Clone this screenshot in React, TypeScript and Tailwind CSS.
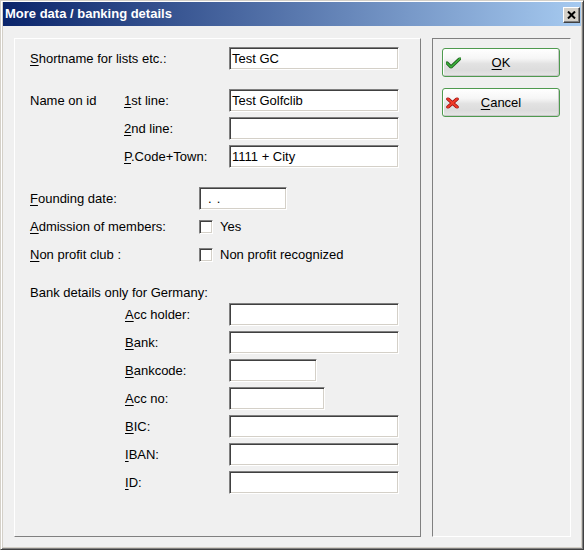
import React from "react";

const font = { fontFamily: '"Liberation Sans", Arial, sans-serif' };

function U({ children }: { children: React.ReactNode }) {
  return <span className="underline underline-offset-[2px]">{children}</span>;
}

function Field({ w, children }: { w: string; children?: React.ReactNode }) {
  return (
    <div
      className={`${w} h-[23px] bg-white border border-t-[#808080] border-l-[#808080] border-b-white border-r-white shadow-[inset_1px_1px_0_#404040,inset_-1px_-1px_0_#d4d0c8] pl-[2px] flex items-center text-[13px] text-black whitespace-nowrap overflow-hidden`}
    >
      {children}
    </div>
  );
}

function Check() {
  return (
    <div className="w-[14px] h-[14px] bg-white border border-t-[#808080] border-l-[#808080] border-b-white border-r-white shadow-[inset_1px_1px_0_#404040,inset_-1px_-1px_0_#d4d0c8]" />
  );
}

function CheckIcon() {
  return (
    <svg width="15" height="11" viewBox="0 0 15 11">
      <path d="M1 5.5 L5 9.5 L14 1" fill="none" stroke="#1f5f1f" strokeWidth="3.2" strokeLinejoin="round" strokeLinecap="round" />
      <path d="M1 5.5 L5 9.5 L14 1" fill="none" stroke="#3cb43c" strokeWidth="1.6" strokeLinejoin="round" strokeLinecap="round" />
    </svg>
  );
}

function CrossIcon() {
  return (
    <svg width="13" height="11" viewBox="0 0 13 11">
      <path d="M2 1.5 L11 9.5 M11 1.5 L2 9.5" fill="none" stroke="#9a1010" strokeWidth="3.6" strokeLinecap="round" />
      <path d="M2 1.5 L11 9.5 M11 1.5 L2 9.5" fill="none" stroke="#f03a28" strokeWidth="2" strokeLinecap="round" />
    </svg>
  );
}

function DlgButton({ icon, children }: { icon: React.ReactNode; children: React.ReactNode }) {
  return (
    <div className="relative w-[118px] h-[29px] rounded-[3px] border border-[#4f9a4f] bg-[linear-gradient(to_bottom,#ffffff_0%,#f6f6f6_35%,#e2e2e2_55%,#dcdcdc_80%,#e6e6e6_100%)] shadow-[inset_1px_1px_0_#ffffff,inset_-1px_-1px_0_#c8c8c8] flex items-center justify-center text-[13px] text-black">
      <span className="absolute left-[3px] top-1/2 -translate-y-1/2 flex">{icon}</span>
      {children}
    </div>
  );
}

export default function App() {
  return (
    <div style={font} className="w-[584px] h-[550px] bg-[#d4d0c8] border border-t-[#d4d0c8] border-l-[#d4d0c8] border-b-[#404040] border-r-[#404040] shadow-[inset_1px_1px_0_#ffffff,inset_-1px_-1px_0_#808080] pt-[1px] px-[2px] pb-[2px] flex flex-col">
      {/* title bar */}
      <div className="h-[24px] shrink-0 bg-[linear-gradient(to_right,#0a246a,#a6caf0)] flex items-start justify-between pl-[2px] pr-[1px]">
        <span className="text-white font-bold text-[13px] leading-[24px]">More data / banking details</span>
        <div className="mt-[5px] w-[17px] h-[16px] bg-[#d4d0c8] border border-t-white border-l-white border-b-[#404040] border-r-[#404040] shadow-[inset_-1px_-1px_0_#808080] flex items-center justify-center">
          <svg width="9" height="8" viewBox="0 0 9 8">
            <path d="M1 0.5 L8 7.5 M8 0.5 L1 7.5" stroke="#000" strokeWidth="2" />
          </svg>
        </div>
      </div>

      {/* body */}
      <div className="flex-1 bg-[#f0f0f0] pt-[12px] pl-[11px] pr-[10px] pb-[10px] flex gap-[11px] text-[13px] text-black">
        {/* left panel */}
        <div className="w-[407px] h-[499px] border border-t-white border-l-white border-b-[#808080] border-r-[#808080] pl-[15px] pt-[8px] flex flex-col">
          <div className="flex items-center h-[23px]">
            <span className="w-[199px]">
              <U>S</U>hortname for lists etc.:
            </span>
            <Field w="w-[170px]">Test GC</Field>
          </div>

          <div className="flex items-center h-[23px] mt-[19px]">
            <span className="w-[94px]">Name on id</span>
            <span className="w-[105px]">
              <U>1</U>st line:
            </span>
            <Field w="w-[170px]">Test Golfclib</Field>
          </div>
          <div className="flex items-center h-[23px] mt-[5px]">
            <span className="w-[94px]" />
            <span className="w-[105px]">
              <U>2</U>nd line:
            </span>
            <Field w="w-[170px]" />
          </div>
          <div className="flex items-center h-[23px] mt-[5px]">
            <span className="w-[94px]" />
            <span className="w-[105px]">
              <U>P</U>.Code+Town:
            </span>
            <Field w="w-[170px]">1111 + City</Field>
          </div>

          <div className="flex items-center h-[23px] mt-[19px]">
            <span className="w-[169px]">
              <U>F</U>ounding date:
            </span>
            <Field w="w-[88px]">
              <span className="ml-[6px]">.</span>
              <span className="ml-[5px]">.</span>
            </Field>
          </div>
          <div className="flex items-center h-[23px] mt-[5px]">
            <span className="w-[169px]">
              <U>A</U>dmission of members:
            </span>
            <Check />
            <span className="ml-[7px]">Yes</span>
          </div>
          <div className="flex items-center h-[23px] mt-[5px]">
            <span className="w-[169px]">
              <U>N</U>on profit club :
            </span>
            <Check />
            <span className="ml-[7px]">Non profit recognized</span>
          </div>

          <div className="flex items-center h-[16px] mt-[19px]">Bank details only for Germany:</div>

          {[
            { l: "A", r: "cc holder:", w: "w-[170px]", mt: "mt-[2px]" },
            { l: "B", r: "ank:", w: "w-[170px]", mt: "mt-[5px]" },
            { l: "B", r: "ankcode:", w: "w-[88px]", mt: "mt-[5px]" },
            { l: "A", r: "cc no:", w: "w-[96px]", mt: "mt-[5px]" },
            { l: "B", r: "IC:", w: "w-[170px]", mt: "mt-[5px]" },
            { l: "I", r: "BAN:", w: "w-[170px]", mt: "mt-[5px]" },
            { l: "I", r: "D:", w: "w-[170px]", mt: "mt-[5px]" },
          ].map((row, i) => (
            <div key={i} className={`flex items-center h-[23px] ${row.mt}`}>
              <span className="w-[95px]" />
              <span className="w-[104px]">
                <U>{row.l}</U>
                {row.r}
              </span>
              <Field w={row.w} />
            </div>
          ))}
        </div>

        {/* right panel */}
        <div className="w-[139px] h-[499px] border border-t-[#808080] border-l-[#808080] border-b-white border-r-white pt-[9px] pl-[9px] flex flex-col gap-[11px]">
          <DlgButton icon={<CheckIcon />}>
            <U>O</U>K
          </DlgButton>
          <DlgButton icon={<CrossIcon />}>
            <U>C</U>ancel
          </DlgButton>
        </div>
      </div>
    </div>
  );
}
